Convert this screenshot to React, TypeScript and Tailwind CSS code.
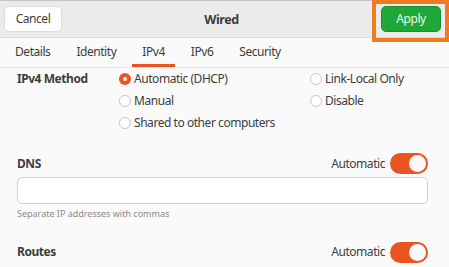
import React from "react";

function Radio({ checked, label }: { checked?: boolean; label: string }) {
  return (
    <div className="flex items-center gap-[3px] h-[22px]">
      {checked ? (
        <span className="w-[12px] h-[12px] rounded-full bg-[#e95420] flex items-center justify-center">
          <span className="w-[4px] h-[4px] rounded-full bg-white" />
        </span>
      ) : (
        <span className="w-[12px] h-[12px] rounded-full border border-[#c8c8c8] bg-white" />
      )}
      <span>{label}</span>
    </div>
  );
}

function Toggle() {
  return (
    <span className="w-[38px] h-[21px] rounded-full bg-[#e95420] flex items-center justify-end pr-[2px]">
      <span className="w-[17px] h-[17px] rounded-full bg-[#fafafa]" />
    </span>
  );
}

export default function App() {
  const tabs = ["Details", "Identity", "IPv4", "IPv6", "Security"];
  return (
    <div
      className="relative w-[449px] h-[267px] overflow-hidden bg-[#fafafa] text-[#3d3d3d] text-[12px] tracking-[-0.45px]"
      style={{ fontFamily: '"Noto Sans", "Open Sans", sans-serif' }}
    >
      {/* header */}
      <div className="h-[38px] bg-[#ebebeb] border-t border-[#c4c4c4] border-b border-b-[#dadada] flex items-center justify-between pl-[4px] pr-[8px]">
        <button className="w-[58px] h-[26px] rounded-[5px] bg-white border border-[#dcdcdc] text-[#3d3d3d]">
          Cancel
        </button>
        <span className="font-bold text-[12.5px] mt-[2px]">Wired</span>
        <button className="w-[60px] h-[26px] rounded-[5px] bg-[#1fa83a] border border-[#18902f] text-[#eafbe9]">
          Apply
        </button>
      </div>

      {/* highlight around apply */}
      <div className="absolute left-[372px] top-0 w-[77px] h-[42px] border-[4px] border-[#f07a20]" />

      {/* tabs */}
      <div className="h-[30px] flex items-stretch gap-[6px] pl-[5px] border-b border-[#e4e4e4]">
        {tabs.map((t) => (
          <div
            key={t}
            className={
              "px-[10px] pt-[2px] flex items-center border-b-[3px] " +
              (t === "IPv4" ? "border-[#e95420]" : "border-transparent")
            }
          >
            {t}
          </div>
        ))}
      </div>

      {/* ipv4 method */}
      <div className="flex pl-[17px]">
        <div className="w-[102px] h-[22px] flex items-center font-bold">IPv4 Method</div>
        <div className="w-[191px] flex flex-col">
          <Radio checked label="Automatic (DHCP)" />
          <Radio label="Manual" />
          <Radio label="Shared to other computers" />
        </div>
        <div className="flex flex-col">
          <Radio label="Link-Local Only" />
          <Radio label="Disable" />
        </div>
      </div>

      {/* dns */}
      <div className="px-[17px] mt-[19px]">
        <div className="flex items-center justify-between pr-[4px]">
          <span className="font-bold">DNS</span>
          <div className="flex items-center gap-[5px]">
            <span>Automatic</span>
            <Toggle />
          </div>
        </div>
        <div className="mt-[3px] mr-[4px] h-[27px] rounded-[5px] border border-[#d0d0d0] bg-white" />
        <div className="mt-[3px] text-[9px] tracking-[0px] text-[#8a8a8a]">Separate IP addresses with commas</div>
      </div>

      {/* routes */}
      <div className="px-[17px] mt-[21px]">
        <div className="flex items-center justify-between pr-[4px]">
          <span className="font-bold">Routes</span>
          <div className="flex items-center gap-[5px]">
            <span>Automatic</span>
            <Toggle />
          </div>
        </div>
      </div>
    </div>
  );
}
